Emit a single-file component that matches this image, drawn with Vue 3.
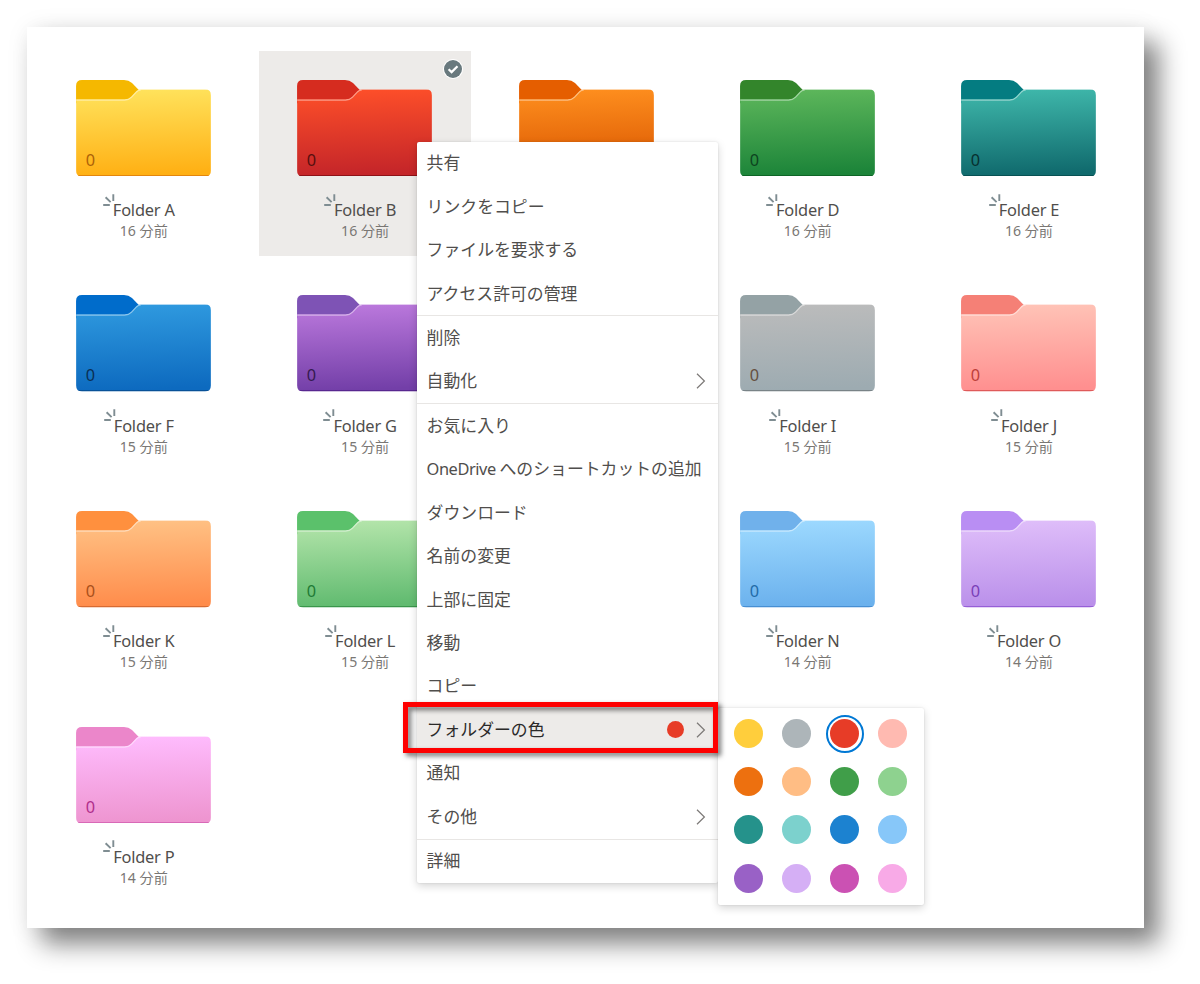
<script setup>
import { ref } from "vue";

// tab, gradient top, gradient bottom, bottom edge, counter
const folders = ref([
  { name: "Folder A", time: "16 分前", colors: ["#f5b800", "#ffe45e", "#ffb014", "#d9780c", "#ad6208"] },
  { name: "Folder B", time: "16 分前", colors: ["#d62c1f", "#ff5029", "#c42529", "#7b0d12", "#58100f"], selected: true },
  { name: "", time: "", colors: ["#e55e00", "#ff901f", "#d95500", "#a33c00", "#6b2a00"] },
  { name: "Folder D", time: "16 分前", colors: ["#33852b", "#5fb85c", "#1c8439", "#0a5a20", "#0d4420"] },
  { name: "Folder E", time: "16 分前", colors: ["#047c81", "#40b9ac", "#106a6d", "#05494b", "#07302f"] },
  { name: "Folder F", time: "15 分前", colors: ["#006ccb", "#309be0", "#0d6abf", "#084a8a", "#0a2f54"] },
  { name: "Folder G", time: "15 分前", colors: ["#7e53b5", "#bd7ade", "#733fa8", "#4f1f88", "#351a50"] },
  null,
  { name: "Folder I", time: "15 分前", colors: ["#94a2a5", "#bcbcbc", "#9dabb1", "#6c7679", "#65503f"] },
  { name: "Folder J", time: "15 分前", colors: ["#f58076", "#ffc5b8", "#ff8f8f", "#d44848", "#bd3f3a"] },
  { name: "Folder K", time: "15 分前", colors: ["#ff903e", "#ffc386", "#ff8c4b", "#c9602a", "#a9501b"] },
  { name: "Folder L", time: "15 分前", colors: ["#5bc16b", "#b6e6ac", "#61bb70", "#2d8a3e", "#217a35"] },
  null,
  { name: "Folder N", time: "14 分前", colors: ["#70b1eb", "#9edaff", "#6bb1ed", "#3a83c9", "#236ba8"] },
  { name: "Folder O", time: "14 分前", colors: ["#b98ef3", "#e0bffa", "#ba90ea", "#8a4fd0", "#7a3fb8"] },
  { name: "Folder P", time: "14 分前", colors: ["#eb86ca", "#ffbdff", "#ee95d0", "#d05aae", "#b02f8c"] },
]);

const menu = [
  ["共有", "リンクをコピー", "ファイルを要求する", "アクセス許可の管理"],
  ["削除", "自動化"],
  [
    "お気に入り",
    "OneDrive へのショートカットの追加",
    "ダウンロード",
    "名前の変更",
    "上部に固定",
    "移動",
    "コピー",
    "フォルダーの色",
    "通知",
    "その他",
  ],
  ["詳細"],
];

const submenus = ["自動化", "フォルダーの色", "その他"];
const active = "フォルダーの色";

// odd parts are latin words, which are set tighter than the kana
const parts = (text) => text.split(/([A-Za-z]+ ?)/);

const swatches = [
  "#ffce3c", "#adb5b9", "#e73c27", "#ffbab1",
  "#ed700f", "#ffbd84", "#409e49", "#8ed28f",
  "#25928b", "#7cd1cd", "#1c82d0", "#87c7f9",
  "#9961c6", "#d5aff5", "#cb51b3", "#f8aae7",
];
const selectedColor = ref("#e73c27");
</script>

<template>
  <div class="page">
    <main class="panel">
      <div class="grid">
        <div
          v-for="(folder, i) in folders"
          :key="i"
          class="tile"
          :class="{ selected: folder && folder.selected }"
        >
          <template v-if="folder">
            <svg class="folder" viewBox="0 0 405 290">
              <defs>
                <linearGradient :id="'body' + i" x1="0" y1="0" x2="0.06" y2="1">
                  <stop offset="0" :stop-color="folder.colors[1]" />
                  <stop offset="1" :stop-color="folder.colors[2]" />
                </linearGradient>
                <clipPath :id="'clip' + i">
                  <path d="M0 58H146Q157 58 165 50L181 33Q186 28 193 28H387Q405 28 405 46V272Q405 290 387 290H18Q0 290 0 272Z" />
                </clipPath>
              </defs>
              <path d="M0 70V18Q0 0 18 0H144Q158 0 168 9L189 31L157 70Z" :fill="folder.colors[0]" />
              <g :clip-path="`url(#clip${i})`">
                <rect width="405" height="262" y="28" :fill="`url(#body${i})`" />
                <path d="M0 60H146Q158 60 166 52L182 35Q187 30 194 30" fill="none" stroke="#fff" stroke-opacity="0.45" stroke-width="4" />
                <rect y="286" width="405" height="4" :fill="folder.colors[3]" />
              </g>
              <text x="29" y="257" :fill="folder.colors[4]">0</text>
            </svg>
            <div v-if="folder.name" class="name">
              <span class="label">
                <svg class="new" viewBox="0 0 12 12">
                  <path d="M10.3 0.2V7M2.6 3.2L7.6 8.1M0.2 11H6.8" />
                </svg>
                {{ folder.name }}
              </span>
            </div>
            <div class="time">{{ folder.time }}</div>
            <svg v-if="folder.selected" class="check" viewBox="0 0 20 20">
              <circle cx="10" cy="10" r="10" fill="#fff" />
              <circle cx="10" cy="10" r="9" fill="#69797e" />
              <path d="M5.6 10.2L8.6 13.1L14.5 7.2" />
            </svg>
          </template>
        </div>
      </div>
    </main>

    <nav class="menu">
      <ul v-for="(group, g) in menu" :key="g">
        <li v-for="item in group" :key="item" :class="{ active: item === active }">
          <span class="text"><span
            v-for="(part, p) in parts(item)"
            :key="p"
            :class="{ latin: p % 2 }"
          >{{ part }}</span></span>
          <i v-if="item === active" class="dot"></i>
          <svg v-if="submenus.includes(item)" class="chevron" viewBox="0 0 10 16">
            <path d="M1 0.8L8.4 8L1 15.2" />
          </svg>
        </li>
      </ul>
    </nav>

    <div class="palette">
      <button
        v-for="color in swatches"
        :key="color"
        class="swatch"
        :class="{ chosen: color === selectedColor }"
        @click="selectedColor = color"
      >
        <i :style="{ background: color }"></i>
      </button>
    </div>

    <div class="highlight"></div>
  </div>
</template>

<style>
body {
  margin: 0;
  background: #fff;
}
</style>

<style scoped>
.page {
  position: relative;
  box-sizing: border-box;
  width: 1200px;
  height: 984px;
  padding: 27px 0 0 27px;
  overflow: hidden;
  font-family: "Noto Sans", "Noto Sans CJK JP", sans-serif;
  color: #504e4c;
}

.panel {
  box-sizing: border-box;
  width: 1117.4px;
  height: 901.4px;
  padding: 24.4px 0 0 10.8px;
  background: #fff;
  box-shadow: 15px 16px 24px rgba(0, 0, 0, 0.48), 2px 2px 24px rgba(0, 0, 0, 0.08);
}

.grid {
  display: grid;
  grid-template-columns: repeat(5, 212px);
  grid-auto-rows: 205px;
  gap: 10.6px 9.3px;
}

.tile {
  position: relative;
  display: flex;
  flex-direction: column;
  align-items: center;
  padding-top: 28.5px;
  box-sizing: border-box;
}

.tile.selected {
  background: #edebe9;
}

.folder {
  width: 135px;
  height: 96.6px;
  margin-right: 0.6px;
}

.folder text {
  font-size: 49px;
}

.name {
  margin-top: 21.6px;
  font-size: 16.4px;
  line-height: 24px;
  letter-spacing: -0.2px;
}

.label {
  position: relative;
}

.new {
  position: absolute;
  left: -10px;
  top: -4.5px;
  width: 12px;
  height: 12px;
}

.new path {
  fill: none;
  stroke: #7f8d92;
  stroke-width: 1.9;
}

.time {
  margin-top: -0.8px;
  font-size: 14.1px;
  line-height: 20px;
  color: #7a7774;
}

.check {
  position: absolute;
  top: 7.5px;
  right: 8.5px;
  width: 20px;
  height: 20px;
}

.check path {
  fill: none;
  stroke: #fff;
  stroke-width: 2.2;
}

.menu {
  position: absolute;
  left: 417px;
  top: 141.5px;
  width: 300.5px;
  background: #fff;
  border-radius: 2px;
  box-shadow: 0 3px 9px rgba(0, 0, 0, 0.17), 0 0 2px rgba(0, 0, 0, 0.12);
}

ul {
  margin: 0;
  padding: 0;
  list-style: none;
}

ul + ul {
  border-top: 1px solid #e8e6e4;
}

li {
  display: flex;
  align-items: center;
  box-sizing: border-box;
  height: 43.45px;
  padding: 0 12px 0 9.6px;
  font-size: 16.85px;
  line-height: 24px;
  white-space: nowrap;
}

.text {
  flex: 1;
}

.latin {
  font-size: 16.4px;
  letter-spacing: -0.45px;
}

li.active {
  background: #edebe9;
  color: #2b2a29;
}

.dot {
  width: 17px;
  height: 17px;
  margin-right: 12px;
  border-radius: 50%;
  background: #e73c27;
}

.chevron {
  width: 10px;
  height: 16px;
}

.chevron path {
  fill: none;
  stroke: #7c7977;
  stroke-width: 1.2;
}

.palette {
  position: absolute;
  left: 717.5px;
  top: 708px;
  display: grid;
  grid-template-columns: repeat(4, 48px);
  grid-auto-rows: 48.1px;
  box-sizing: border-box;
  width: 206.5px;
  height: 197px;
  padding: 1.8px 7px;
  background: #fff;
  border-radius: 2px;
  box-shadow: 0 3px 9px rgba(0, 0, 0, 0.17), 0 0 2px rgba(0, 0, 0, 0.12);
}

.swatch {
  display: flex;
  align-items: center;
  justify-content: center;
  box-sizing: border-box;
  width: 38px;
  height: 38px;
  margin: 5px;
  padding: 0;
  border: 2px solid transparent;
  border-radius: 50%;
  background: none;
}

.swatch.chosen {
  border-color: #0078d4;
}

.swatch i {
  width: 29px;
  height: 29px;
  border-radius: 50%;
}

.highlight {
  position: absolute;
  left: 403px;
  top: 702px;
  box-sizing: border-box;
  width: 315px;
  height: 51px;
  border: 5px solid #fe0000;
  filter: drop-shadow(3px 3px 2.5px rgba(0, 0, 0, 0.55));
  pointer-events: none;
}
</style>
